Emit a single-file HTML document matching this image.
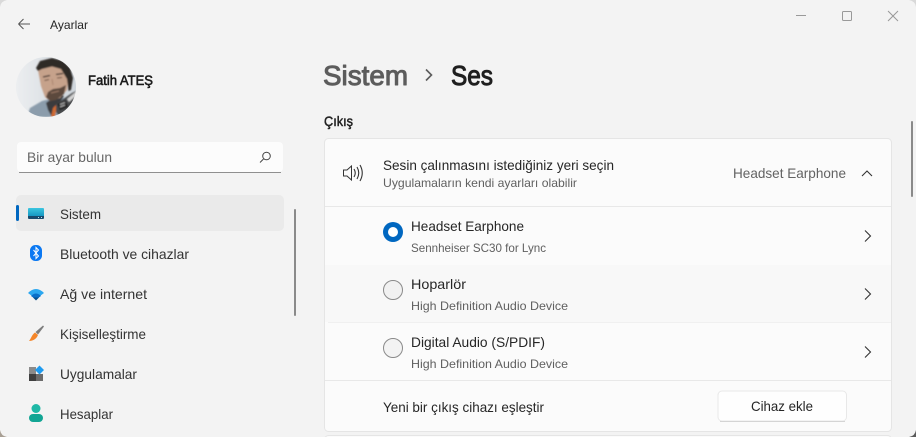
<!DOCTYPE html>
<html lang="tr"><head><meta charset="utf-8"><title>Ayarlar</title>
<style>
html,body{margin:0;padding:0;width:916px;height:437px;overflow:hidden;background:#f3f3f3}
svg{display:block}
text{font-family:"Liberation Sans",sans-serif;font-size:14px;fill:#262626}
.s{font-size:12px;fill:#606060}
.b{stroke-linejoin:round}
</style></head><body>
<svg width="916" height="437" viewBox="0 0 916 437" xmlns="http://www.w3.org/2000/svg">
<defs>
<clipPath id="av"><circle cx="46" cy="87" r="30"/></clipPath>
<linearGradient id="sys" x1="0" y1="0" x2="0" y2="1"><stop offset="0" stop-color="#3cc6e0"/><stop offset=".72" stop-color="#1798c2"/><stop offset=".73" stop-color="#17496b"/><stop offset="1" stop-color="#1a4a6e"/></linearGradient>
<linearGradient id="bg" x1="0" y1="0" x2="1" y2="0"><stop offset="0" stop-color="#eceef0"/><stop offset="1" stop-color="#cfd6dc"/></linearGradient>
<filter id="bl" x="-10%" y="-10%" width="120%" height="120%"><feGaussianBlur stdDeviation=".7"/></filter>
</defs>

<rect width="916" height="437" fill="#f3f3f3"/>
<!-- window corners -->
<path d="M0 7V0H7Q1 1 0 7Z" fill="#d9d9d9"/>
<path d="M909 0H916V7Q915 1 909 0Z" fill="#d9d9d9"/>
<path d="M0 430V437H7Q1 436 0 430Z" fill="#a89f94"/>
<path d="M916 430V437H909Q915 436 916 430Z" fill="#5b5b5b"/>

<!-- title bar -->
<path d="M18.5 24H30M18.5 24L23.5 19M18.5 24L23.5 29" fill="none" stroke="#555" stroke-width="1"/>
<text x="50" y="29" class="s" style="fill:#262626" textLength="38" lengthAdjust="spacingAndGlyphs">Ayarlar</text>
<path d="M796 15.500H806" stroke="#999"/>
<rect x="842.500" y="11.500" width="9" height="9" rx="1" fill="none" stroke="#999"/>
<path d="M888 11L898 21M898 11L888 21" stroke="#999"/>

<!-- avatar -->
<g clip-path="url(#av)">
<rect x="16" y="57" width="60" height="60" fill="url(#bg)"/>
<g filter="url(#bl)">
<path d="M27 117L30 108L42 101L54 98L66 98L66 117Z" fill="#8b9cab"/>
<path d="M46 103L58 94L64 96L56 108L52 117L48 110Z" fill="#3a3b3c"/>
<path d="M53 108L57 104L55 117L51 117Z" fill="#cf6a30"/>
<path d="M56 104L72 93L78 90V110L60 117L56 112Z" fill="#47494b"/>
<rect x="58" y="102" width="9" height="7" fill="#222" transform="rotate(-22 62 105)"/>
<path d="M60 104.500L65 102.500M60 107L65 105" stroke="#d8d8d8" stroke-width=".8"/>
<path d="M67 99L78 90V94L69 102Z" fill="#d4d4d4"/>
<path d="M38 70L60 64L68 80L67 90L60 98L50 101L45 97L41 86Z" fill="#c6a28b"/>
<path d="M46 97L48 92L53 89L60 88L66 85L64 94L56 100L50 101Z" fill="#5c493e"/>
<path d="M51 93L59 91" stroke="#b08872" stroke-width=".9"/>
<path d="M36 68L40 61L52 58L63 61L70 68L73 78L71 90L68.500 91L67 79L61 69L52 66.500L42 69L38 71Z" fill="#2f2927"/>
<path d="M43 77L50 75.500M56 74.500L63 73.500" stroke="#3a2c25" stroke-width="1.200"/>
<path d="M44.500 80.500L49 79.500M57 78L62 77.500" stroke="#6c5042" stroke-width="1"/>
<path d="M52 79L53 85" stroke="#a8836d" stroke-width=".9"/>
</g>
</g>
<text x="88" y="85" class="b" textLength="65" lengthAdjust="spacingAndGlyphs" style="fill:#1a1a1a;stroke:#1a1a1a;stroke-width:.6">Fatih ATEŞ</text>

<!-- search -->
<rect x="17" y="142" width="266" height="30" rx="4" fill="#fcfcfc"/>
<path d="M19 172.500H281" stroke="#8f8f8f"/>
<text x="27" y="162" textLength="85" lengthAdjust="spacingAndGlyphs" style="fill:#666">Bir ayar bulun</text>
<circle cx="266.500" cy="156" r="3.800" fill="none" stroke="#444" stroke-width="1"/>
<path d="M263.500 159L260 162.500" stroke="#444" stroke-width="1"/>

<!-- nav -->
<rect x="16" y="195" width="268" height="36" rx="5" fill="#eaeaea"/>
<rect x="16" y="205" width="3" height="16" rx="1.500" fill="#0067c0"/>
<rect x="28" y="208" width="16" height="11" rx="1" fill="url(#sys)"/>
<path d="M38 217.500h1M41 217.500h1" stroke="#bfe6f2"/>
<text x="60" y="219" textLength="41" lengthAdjust="spacingAndGlyphs" style="fill:#333">Sistem</text>

<rect x="30" y="245" width="12" height="16" rx="5.500" fill="#0b78f2"/>
<path d="M33.500 250L38.500 256L36 258.500V247.500L38.500 250L33.500 256" fill="none" stroke="#fff" stroke-width="1"/>
<text x="60" y="259" textLength="129" lengthAdjust="spacingAndGlyphs" style="fill:#333">Bluetooth ve cihazlar</text>

<path d="M28 293Q36 285 44 293L36 299Z" fill="#2ba7f0"/>
<path d="M31 296Q36 291 41 296L36 299.500Z" fill="#0a6fc9"/>
<path d="M33 297.500L36 300.500L39 297.500Z" fill="#07518f"/>
<text x="60" y="299" textLength="87" lengthAdjust="spacingAndGlyphs" style="fill:#333">Ağ ve internet</text>

<path d="M35.500 332L43 325.500L44 326.500L38 334.500Z" fill="#7d7d7d"/>
<path d="M35 332.500L38 335C36.500 339 33 341 29 341C31 339 31.500 335 35 332.500Z" fill="#f4862a"/>
<text x="60" y="339" textLength="86" lengthAdjust="spacingAndGlyphs" style="fill:#333">Kişiselleştirme</text>

<rect x="29" y="367" width="7" height="7" fill="#8a8a8a"/>
<rect x="29" y="374" width="7" height="7" fill="#3f3f3f"/>
<rect x="36" y="374" width="7" height="7" fill="#6b6b6b"/>
<path d="M39.500 365.500L44 370L39.500 374.500L35 370Z" fill="#1e9bf0"/>
<text x="60" y="379" textLength="77" lengthAdjust="spacingAndGlyphs" style="fill:#333">Uygulamalar</text>

<circle cx="36" cy="408.500" r="4.500" fill="#1fb8a6"/>
<rect x="29" y="414" width="14" height="8" rx="4" fill="#12a594"/>
<text x="60" y="419" textLength="53" lengthAdjust="spacingAndGlyphs" style="fill:#333">Hesaplar</text>

<rect x="294" y="209" width="2" height="107" rx="1" fill="#8a8a8a"/>
<rect x="911" y="121" width="2" height="76" rx="1" fill="#8a8a8a"/>

<!-- heading -->
<text x="323" y="85" class="b" textLength="85" lengthAdjust="spacingAndGlyphs" style="font-size:28px;fill:#5c5c5c;stroke:#5c5c5c;stroke-width:1">Sistem</text>
<path d="M426 69.500L431.500 75L426 80.500" fill="none" stroke="#5c5c5c" stroke-width="1.600"/>
<text x="451" y="85" class="b" textLength="42" lengthAdjust="spacingAndGlyphs" style="font-size:28px;fill:#1f1f1f;stroke:#1f1f1f;stroke-width:1">Ses</text>
<text x="324" y="126" class="b" textLength="29" lengthAdjust="spacingAndGlyphs" style="fill:#222;stroke:#222;stroke-width:.5">Çıkış</text>

<!-- card -->
<rect x="324.500" y="138.500" width="567" height="293" rx="4" fill="#fbfbfb" stroke="#e5e5e5"/>
<path d="M325 206.500H891" stroke="#e8e8e8"/>
<rect x="325" y="265" width="566" height="57" fill="#f8f8f8"/>
<path d="M328 322.500H891" stroke="#f0f0f0"/>
<path d="M325 380.500H891" stroke="#e8e8e8"/>
<rect x="324.500" y="435.500" width="567" height="10" rx="4" fill="#fbfbfb" stroke="#e5e5e5"/>

<path d="M343.500 170H347L351.500 166V180L347 176H343.500Z" fill="none" stroke="#333" stroke-width="1"/>
<path d="M354 169Q356.500 173 354 177M357 167Q360.500 173 357 179M360 165Q364.500 173 360 181" fill="none" stroke="#333" stroke-width="1.100"/>
<text x="383" y="170" textLength="231" lengthAdjust="spacingAndGlyphs">Sesin çalınmasını istediğiniz yeri seçin</text>
<text x="383" y="187" class="s" textLength="194" lengthAdjust="spacingAndGlyphs">Uygulamaların kendi ayarları olabilir</text>
<text x="733" y="178" textLength="113" lengthAdjust="spacingAndGlyphs" style="fill:#636363">Headset Earphone</text>
<path d="M862 176L867 171L872 176" fill="none" stroke="#333" stroke-width="1.100"/>

<circle cx="393" cy="232" r="10" fill="#0067c0"/>
<circle cx="393" cy="232" r="5" fill="#fff"/>
<text x="411" y="231" textLength="113" lengthAdjust="spacingAndGlyphs">Headset Earphone</text>
<text x="411" y="252" class="s" textLength="135" lengthAdjust="spacingAndGlyphs">Sennheiser SC30 for Lync</text>
<path d="M865 230.500L870.500 236L865 241.500" fill="none" stroke="#333" stroke-width="1.100"/>

<circle cx="393" cy="290" r="9.500" fill="#f1f1f1" stroke="#8a8a8a"/>
<text x="411" y="289" textLength="55" lengthAdjust="spacingAndGlyphs">Hoparlör</text>
<text x="411" y="310" class="s" textLength="157" lengthAdjust="spacingAndGlyphs">High Definition Audio Device</text>
<path d="M865 288.500L870.500 294L865 299.500" fill="none" stroke="#333" stroke-width="1.100"/>

<circle cx="393" cy="348" r="9.500" fill="#f3f3f3" stroke="#8a8a8a"/>
<text x="411" y="347" textLength="134" lengthAdjust="spacingAndGlyphs">Digital Audio (S/PDIF)</text>
<text x="411" y="368" class="s" textLength="157" lengthAdjust="spacingAndGlyphs">High Definition Audio Device</text>
<path d="M865 346.500L870.500 352L865 357.500" fill="none" stroke="#333" stroke-width="1.100"/>

<text x="383" y="412" textLength="161" lengthAdjust="spacingAndGlyphs">Yeni bir çıkış cihazı eşleştir</text>
<rect x="718" y="391" width="128.500" height="30" rx="4" fill="#fefefe" stroke="#e8e8e8"/>
<path d="M720 421.500H845" stroke="#d4d4d4"/>
<text x="751" y="411" textLength="62" lengthAdjust="spacingAndGlyphs">Cihaz ekle</text>
</svg>
</body></html>
